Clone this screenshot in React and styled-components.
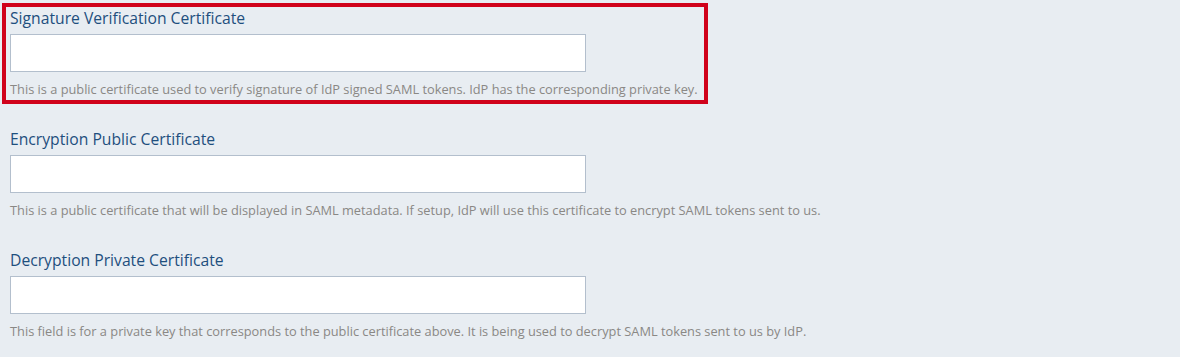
import React from 'react';
import styled, { createGlobalStyle } from 'styled-components';

const GlobalStyle = createGlobalStyle`
  html, body {
    margin: 0;
    padding: 0;
    background: #e8edf2;
  }
  body {
    font-family: "Open Sans", "Noto Sans", sans-serif;
  }
`;

const Page = styled.div`
  width: 1180px;
  height: 357px;
  padding: 3px 0 0 2px;
  box-sizing: border-box;
  background: #e8edf2;
  display: flex;
  flex-direction: column;
  align-items: flex-start;
  gap: 20px;
  overflow: hidden;
`;

const Field = styled.div`
  flex-shrink: 0;
  min-width: 706px;
  height: 101px;
  box-sizing: border-box;
  border: 4px solid ${p => (p.highlighted ? '#d0021b' : 'transparent')};
  padding: 0 4px;
  display: flex;
  flex-direction: column;
`;

const Label = styled.label`
  font-size: 15.7px;
  line-height: 20px;
  color: #1e4f7e;
  margin-top: 1px;
  margin-bottom: 6px;
`;

const Input = styled.input`
  flex-shrink: 0;
  width: 576px;
  height: 38px;
  box-sizing: border-box;
  border: 1px solid #b3bfcd;
  background: #fff;
  padding: 0 10px;
  font-family: inherit;
  font-size: 14px;
  outline: none;
`;

const Help = styled.p`
  margin: 7px 0 0;
  font-size: 12.8px;
  line-height: 20px;
  color: #8a8885;
  white-space: nowrap;
`;

const fields = [
  {
    label: 'Signature Verification Certificate',
    help: 'This is a public certificate used to verify signature of IdP signed SAML tokens. IdP has the corresponding private key.',
    highlighted: true,
  },
  {
    label: 'Encryption Public Certificate',
    help: 'This is a public certificate that will be displayed in SAML metadata. If setup, IdP will use this certificate to encrypt SAML tokens sent to us.',
  },
  {
    label: 'Decryption Private Certificate',
    help: 'This field is for a private key that corresponds to the public certificate above. It is being used to decrypt SAML tokens sent to us by IdP.',
  },
];

const App = () => (
  <>
    <GlobalStyle />
    <Page>
      {fields.map(f => (
        <Field key={f.label} highlighted={f.highlighted}>
          <Label>{f.label}</Label>
          <Input type="text" />
          <Help>{f.help}</Help>
        </Field>
      ))}
    </Page>
  </>
);

export default App;
